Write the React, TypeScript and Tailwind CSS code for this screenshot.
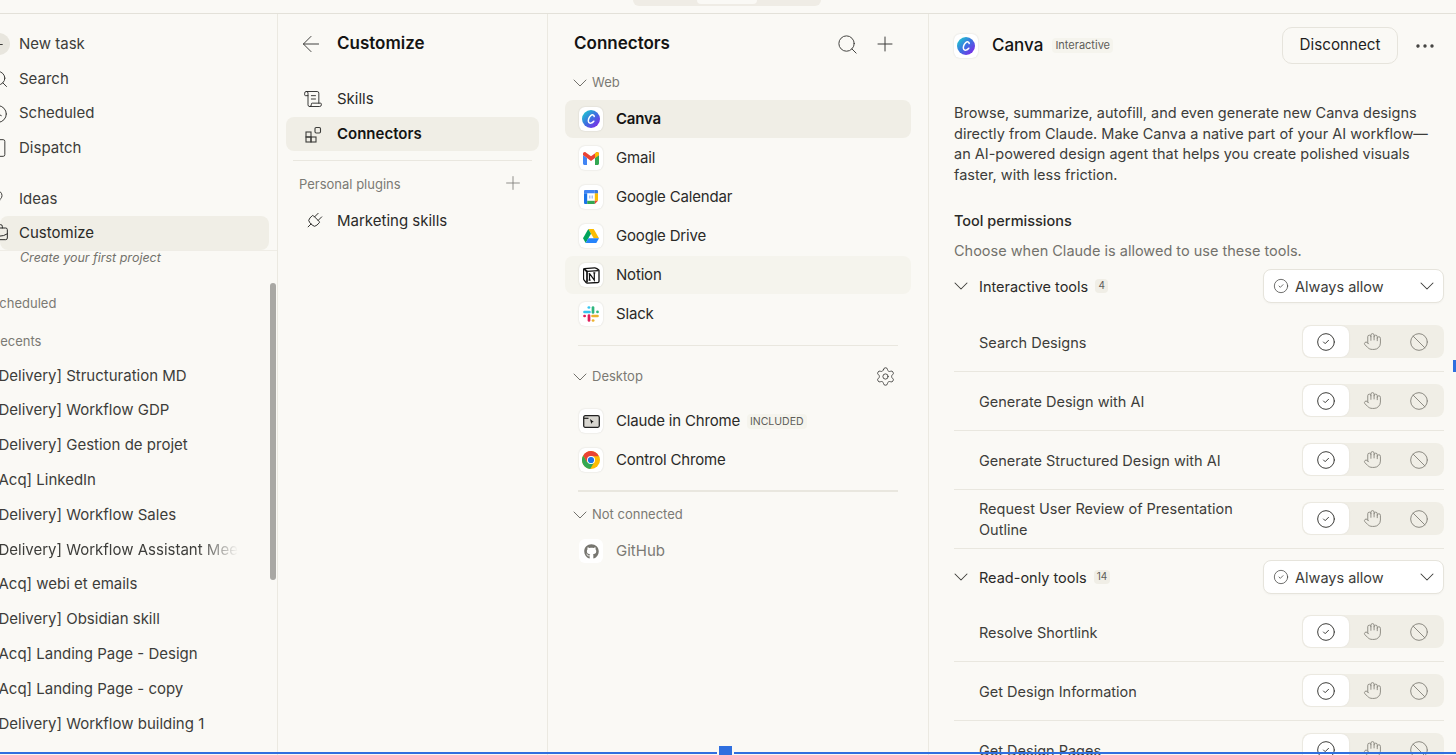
import React from "react";
import { ArrowLeft, Search, Plus, Settings, ChevronDown, Hand, Ban, CircleCheck, Ellipsis, Clock, ScrollText, Plug, Lightbulb, BriefcaseBusiness, Smartphone } from "lucide-react";
import { FaGithub } from "react-icons/fa";

const CanvaLogo = ({ s = 18, id }: { s?: number; id: string }) => (
  <svg width={s} height={s} viewBox="0 0 24 24">
    <defs>
      <linearGradient id={id} x1="0.1" y1="0.1" x2="0.9" y2="0.9">
        <stop offset="0" stopColor="#1fc3d0" />
        <stop offset="0.5" stopColor="#3d6fe0" />
        <stop offset="1" stopColor="#7d2ae8" />
      </linearGradient>
    </defs>
    <circle cx="12" cy="12" r="12" fill={`url(#${id})`} />
    <path d="M16.300 8.800c-.1-2.400-2.600-3-4.600-1.400-2.700 2.200-4.200 6.800-2.700 9.200 1.300 2 4.500 1 6.700-1.700" fill="none" stroke="#fff" strokeWidth="2" strokeLinecap="round" />
  </svg>
);
const GmailLogo = () => (
  <svg width="16" height="13" viewBox="0 0 16 13">
    <path d="M0 3v8.500C0 12.300.7 13 1.500 13H4V6z" fill="#4285f4" />
    <path d="M12 6v7h2.500c.8 0 1.500-.7 1.500-1.500V3z" fill="#34a853" />
    <path d="M0 1.800C0 .3 1.700-.5 2.800.4L8 4.300l5.200-3.900C14.300-.5 16 .3 16 1.800V3l-4 3-4 3-4-3-4-3z" fill="#ea4335" />
    <path d="M12 .9l1.200-.5C14.300-.5 16 .3 16 1.800V3l-4 3z" fill="#fbbc04" />
  </svg>
);
const CalendarLogo = () => (
  <svg width="14" height="14" viewBox="0 0 14 14">
    <rect width="14" height="14" rx="1" fill="#fff" />
    <path d="M0 3.200h3.200V14H1a1 1 0 0 1-1-1z" fill="#1a73e8" />
    <path d="M1 0h9.800v3.200H0V1a1 1 0 0 1 1-1z" fill="#4285f4" />
    <path d="M3.200 10.800h7.600V14H3.200z" fill="#34a853" />
    <path d="M10.800 3.200H14v7.600h-3.200z" fill="#fbbc04" />
    <path d="M10.800 0H13a1 1 0 0 1 1 1v2.200h-3.200z" fill="#3b78d8" />
    <path d="M10.800 10.800H14L10.800 14z" fill="#ea4335" />
    <path d="M5 5.500h1.500v3H5zM7.500 5.500H9v3H7.500z" fill="#a9c4f5" />
  </svg>
);
const DriveLogo = () => (
  <svg width="16" height="14" viewBox="0 0 16 14">
    <path d="M5.300 0h5.400l5.300 9.200h-5.300z" fill="#fbbc04" />
    <path d="M5.300 0L0 9.200 2.700 14l5.300-9.200z" fill="#00a35c" />
    <path d="M2.700 14h10.600L16 9.200H5.300z" fill="#2684fc" />
  </svg>
);
const NotionLogo = () => (
  <svg width="17" height="17" viewBox="0 0 17 17">
    <path d="M1.500 1.600L11.500.8c1-.1 1.400.1 2 .6l2 1.400c.4.3.5.4.5.8v10.700c0 .7-.2 1.100-1.100 1.200l-10.500.6c-.7 0-1-.1-1.300-.5L1 12.800c-.3-.5-.5-.8-.5-1.300V2.600c0-.5.400-1 1-1z" fill="#fff" stroke="#111" strokeWidth="1.300" />
    <path d="M1 1.800l3 2.700v11" fill="none" stroke="#111" strokeWidth="1.700" />
    <path d="M4 4.300l11.500-.7" fill="none" stroke="#111" strokeWidth="1.300" />
    <path d="M6.500 13V6.800l-.8-.2M6.600 6.600l4.700 6.500V5.800m-1 0h2M5.600 13.100h2" fill="none" stroke="#111" strokeWidth="1.200" />
  </svg>
);
const SlackLogo = () => (
  <svg width="16" height="16" viewBox="0 0 16 16" strokeLinecap="round" strokeWidth="2.700" fill="none">
    <path d="M1.500 6h5" stroke="#36c5f0" />
    <path d="M5.800 1.500h.2" stroke="#36c5f0" />
    <path d="M10 1.500v5" stroke="#2eb67d" />
    <path d="M14.500 5.800v.2" stroke="#2eb67d" />
    <path d="M14.500 10h-5" stroke="#ecb22e" />
    <path d="M10 14.500h.2" stroke="#ecb22e" />
    <path d="M6 14.500v-5" stroke="#e01e5a" />
    <path d="M1.500 10h.2" stroke="#e01e5a" />
  </svg>
);
const ClaudeChromeLogo = () => (
  <svg width="17" height="13" viewBox="0 0 17 13">
    <rect x="0.700" y="0.700" width="15.600" height="11.600" rx="1.500" fill="#d8d6d0" stroke="#222" strokeWidth="1.300" />
    <path d="M1 3.300h4.500" stroke="#222" strokeWidth="1.200" />
    <path d="M7 4l3.800 3-1.700.3-.8 1.700z" fill="#111" />
  </svg>
);
const ChromeLogo = () => (
  <svg width="18" height="18" viewBox="0 0 18 18">
    <circle cx="9" cy="9" r="9" fill="#fbbc04" />
    <path d="M9 0A9 9 0 0 0 1.200 4.500L5 11l4-5.800h7.800A9 9 0 0 0 9 0z" fill="#ea4335" />
    <path d="M1.200 4.500A9 9 0 0 0 8.200 18l3.700-6.200L5 11z" fill="#34a853" />
    <circle cx="9" cy="9" r="4" fill="#fff" />
    <circle cx="9" cy="9" r="3.100" fill="#1a73e8" />
  </svg>
);
const ConnectorsIcon = () => (
  <svg width="17" height="17" viewBox="0 0 17 17" fill="none" stroke="#3d3d3a" strokeWidth="1.100">
    <rect x="1" y="6" width="5" height="5" />
    <rect x="1" y="11" width="5" height="5" />
    <rect x="6" y="11" width="5" height="5" />
    <rect x="10" y="1.500" width="5.500" height="5.500" rx="1.200" />
  </svg>
);

const LogoBox = ({ children, dim }: { children: React.ReactNode; dim?: boolean }) => (
  <span className={`flex h-6 w-6 shrink-0 items-center justify-center rounded-md bg-white ${dim ? "" : "shadow-[0_0_2px_rgba(0,0,0,0.14)]"}`}>{children}</span>
);

const SideRow = ({ icon, label, active }: { icon: React.ReactNode; label: string; active?: boolean }) => (
  <div className={`flex h-[34.700px] items-center rounded-lg ${active ? "bg-[#f0eee6] text-[#2a2a28]" : "text-[#3d3d3a]"}`}>
    <span className="flex w-[19px] shrink-0 items-center justify-start overflow-visible">{icon}</span>
    <span>{label}</span>
  </div>
);

const recents = [
  "[Delivery] Structuration MD",
  "[Delivery] Workflow GDP",
  "[Delivery] Gestion de projet",
  "[Acq] LinkedIn",
  "[Delivery] Workflow Sales",
  "[Delivery] Workflow Assistant Meet",
  "[Acq] webi et emails",
  "[Delivery] Obsidian skill",
  "[Acq] Landing Page - Design",
  "[Acq] Landing Page - copy",
  "[Delivery] Workflow building 1",
];

const ConnRow = ({ logo, label, active, hover, bold, extra }: { logo: React.ReactNode; label: string; active?: boolean; hover?: boolean; bold?: boolean; extra?: React.ReactNode }) => (
  <div className={`mb-px flex h-[38px] items-center rounded-lg pl-[14px] tracking-[-0.012em] ${active ? "bg-[#f0eee6]" : hover ? "bg-[#f5f4ed]" : ""}`}>
    <LogoBox>{logo}</LogoBox>
    <span className={`ml-[13px] ${bold ? "font-semibold text-[#141413]" : "text-[#2a2a28]"}`}>{label}</span>
    {extra}
  </div>
);

const SectionHead = ({ label, right }: { label: string; right?: React.ReactNode }) => (
  <div className="flex h-[20px] items-center text-[13px] text-[#7b7a74]">
    <ChevronDown size={24} strokeWidth={1} className="ml-[-6px] text-[#73726c]" />
    <span>{label}</span>
    {right}
  </div>
);

const Toggle = () => (
  <div className="flex h-[33px] w-[142px] shrink-0 items-center rounded-lg bg-[#f0eee6] pl-[1px] text-[#8c8a82]">
    <span className="flex h-[31px] w-[46px] items-center justify-center rounded-lg bg-white text-[#3d3d3a] shadow-[0_0_2px_rgba(0,0,0,0.08)]">
      <CircleCheck size={20} strokeWidth={1.200} />
    </span>
    <span className="flex w-[47px] items-center justify-center"><Hand size={19} strokeWidth={1.200} /></span>
    <span className="flex w-[46px] items-center justify-center"><Ban size={20} strokeWidth={1.200} /></span>
  </div>
);

const ToolRow = ({ label }: { label: React.ReactNode }) => (
  <div className="flex h-[59px] shrink-0 items-center justify-between border-b border-[#e9e7df] pl-[25px] text-[14.500px] leading-[21px] text-[#3d3d3a]">
    <span className="max-w-[300px] pt-[1px]">{label}</span>
    <Toggle />
  </div>
);

const GroupHead = ({ label, count }: { label: string; count: string }) => (
  <div className="flex h-[34px] shrink-0 items-center">
    <ChevronDown size={24} strokeWidth={1.050} className="ml-[-5px] mr-[6px] text-[#3d3d3a]" />
    <span className="pt-[2px] text-[14.500px] text-[#2a2a28]">{label}</span>
    <span className="ml-[7px] flex h-[14px] min-w-[13px] items-center justify-center rounded-sm bg-[#f0eee6] px-[3px] text-[10px] text-[#5e5d59]">{count}</span>
    <div className="ml-auto flex h-[34px] w-[181px] items-center rounded-lg border border-[#e6e4dc] bg-white pl-[9px] pr-[4px] text-[14.500px] text-[#3d3d3a] shadow-[0_1px_2px_rgba(0,0,0,0.03)]">
      <CircleCheck size={16} strokeWidth={1.100} />
      <span className="ml-[6px] pt-[2px]">Always allow</span>
      <ChevronDown size={24} strokeWidth={1.050} className="ml-auto" />
    </div>
  </div>
);

export default function App() {
  return (
    <div className="relative flex h-[755px] w-[1456px] flex-col overflow-hidden bg-[#faf9f5] text-[15px] font-['Inter',sans-serif] text-[#3d3d3a]">
      {/* top strip */}
      <div className="flex h-[14px] shrink-0 justify-center border-b border-[#e3e1d9] bg-[#faf9f5]">
        <div className="ml-[-2px] flex h-[6px] w-[188px] justify-center rounded-b-lg bg-[#efece5]">
          <div className="h-[4px] w-[60px] rounded-b-md bg-[#faf9f5]" />
        </div>
      </div>

      <div className="flex min-h-0 flex-1">
        {/* sidebar */}
        <aside className="relative w-[278px] shrink-0 overflow-hidden border-r border-[#ebe9e1] pt-[13px]">
          <div className="w-[269px]">
            <SideRow label="New task" icon={<span className="ml-[-14px] flex h-[22px] w-[24px] items-center justify-end rounded-full bg-[#e8e6de] pr-[5px]"><Plus size={13} /></span>} />
            <SideRow label="Search" icon={<Search size={20} strokeWidth={1.200} className="ml-[-11px]" />} />
            <SideRow label="Scheduled" icon={<Clock size={20} strokeWidth={1.200} className="ml-[-12px]" />} />
            <SideRow label="Dispatch" icon={<Smartphone size={20} strokeWidth={1.200} className="ml-[-11px]" />} />
            <div className="h-[16px]" />
            <SideRow label="Ideas" icon={<Lightbulb size={20} strokeWidth={1.200} className="ml-[-13px]" />} />
            <div className="flex h-[34px] items-center rounded-lg bg-[#f0eee6] text-[#2a2a28]">
              <span className="flex w-[19px] shrink-0"><BriefcaseBusiness size={20} strokeWidth={1.200} className="ml-[-11px]" /></span>
              <span>Customize</span>
            </div>
          </div>
          <div className="flex h-[15px] items-center border-t border-[#efede6] pl-[20px] text-[12.500px] italic leading-none text-[#73726c]">Create your first project</div>
          <div className="ml-[-9px] mt-[28px] text-[13px] leading-[20px] text-[#7b7a74]">Scheduled</div>
          <div className="ml-[-8px] mt-[18px] text-[13px] leading-[20px] text-[#7b7a74]">Recents</div>
          <div className="mt-[7px] w-[250px]">
            {recents.map((r) => (
              <div key={r} className="ml-[-7px] flex h-[34.800px] items-center whitespace-nowrap">
                <span className={r.endsWith("Meet") ? "block w-[245px] overflow-hidden [mask-image:linear-gradient(to_right,black_84%,transparent_100%)]" : "block"}>{r}</span>
              </div>
            ))}
          </div>
          <div className="absolute left-[270px] top-[269px] h-[297px] w-[6px] rounded-full bg-[#a9a8a4]" />
        </aside>

        {/* customize column */}
        <section className="w-[270px] shrink-0 border-r border-[#ebe9e1] px-[8px] pt-[13px]">
          <div className="flex h-[34px] items-center pl-[12px]">
            <ArrowLeft size={26} strokeWidth={0.900} className="text-[#3d3d3a]" />
            <span className="ml-[13px] text-[17px] font-semibold text-[#141413]">Customize</span>
          </div>
          <div className="mt-[21px] flex h-[34px] items-center pl-[17px] text-[#2a2a28]">
            <ScrollText size={20} strokeWidth={1.100} />
            <span className="ml-[14px]">Skills</span>
          </div>
          <div className="mt-px flex h-[34px] items-center rounded-lg bg-[#f0eee6] pl-[19px] font-semibold text-[#141413]">
            <ConnectorsIcon />
            <span className="ml-[15px]">Connectors</span>
          </div>
          <div className="mx-[7px] mt-[9px] border-t border-[#e9e7df]" />
          <div className="mt-[14px] flex h-[20px] items-center justify-between pl-[13px] pr-[15px] text-[13px] text-[#7b7a74]">
            <span>Personal plugins</span>
            <Plus size={22} strokeWidth={0.900} className="mb-[5px]" />
          </div>
          <div className="mt-[9px] flex h-[34px] items-center pl-[18px] text-[#2a2a28]">
            <Plug size={20} strokeWidth={1.100} className="rotate-45" />
            <span className="ml-[13px]">Marketing skills</span>
          </div>
        </section>

        {/* connectors column */}
        <section className="w-[381px] shrink-0 border-r border-[#ebe9e1] pl-[17px] pr-[17px] pt-[13px]">
          <div className="flex h-[34px] items-center pl-[9px] pr-[14px]">
            <span className="text-[17px] font-semibold text-[#141413]">Connectors</span>
            <Search size={23} strokeWidth={1} className="ml-auto" />
            <Plus size={24} strokeWidth={1} className="ml-[14px]" />
          </div>
          <div className="mt-[12px] pl-[9px]"><SectionHead label="Web" /></div>
          <div className="mt-[7px]">
            <ConnRow active bold label="Canva" logo={<CanvaLogo s={18} id="c1" />} />
            <ConnRow label="Gmail" logo={<GmailLogo />} />
            <ConnRow label="Google Calendar" logo={<CalendarLogo />} />
            <ConnRow label="Google Drive" logo={<DriveLogo />} />
            <ConnRow hover label="Notion" logo={<NotionLogo />} />
            <ConnRow label="Slack" logo={<SlackLogo />} />
          </div>
          <div className="mx-[13px] mt-[12px] border-t border-[#e9e7df]" />
          <div className="mt-[21px] pl-[9px] pr-[15px]">
            <SectionHead label="Desktop" right={<Settings size={21} strokeWidth={1} className="mb-[2px] ml-auto text-[#3d3d3a]" />} />
          </div>
          <div className="mt-[15px]">
            <ConnRow label="Claude in Chrome" logo={<ClaudeChromeLogo />} extra={<span className="ml-[7px] rounded bg-[#f5f4ed] px-[3px] text-[10.500px] leading-[15px] tracking-normal text-[#5e5d59]">INCLUDED</span>} />
            <ConnRow label="Control Chrome" logo={<ChromeLogo />} />
          </div>
          <div className="mx-[13px] mt-[11px] border-t-2 border-[#e9e7df]" />
          <div className="mt-[13px] pl-[9px]"><SectionHead label="Not connected" /></div>
          <div className="mt-[7px] text-[#7b7a74]">
            <div className="flex h-[38px] items-center pl-[14px]">
              <LogoBox dim><FaGithub size={15} className="text-[#777670]" /></LogoBox>
              <span className="ml-[13px] text-[#7b7a74]">GitHub</span>
            </div>
          </div>
        </section>

        {/* detail */}
        <section className="flex min-w-0 flex-1 flex-col overflow-hidden pl-[25px] pr-[12px] pt-[13px]">
          <div className="flex h-[37px] shrink-0 items-center">
            <LogoBox><CanvaLogo s={18} id="c2" /></LogoBox>
            <span className="ml-[14px] text-[17px] font-medium text-[#141413]">Canva</span>
            <span className="ml-[9px] rounded bg-[#f5f4ed] px-[3px] text-[11px] leading-[15px] text-[#5e5d59]">Interactive</span>
            <button className="ml-auto h-[37px] w-[116px] rounded-[10px] border border-[#e6e4dc] text-[15.200px] text-[#1f1f1e]">Disconnect</button>
            <Ellipsis size={24} strokeWidth={1.400} className="ml-[15px] mr-[7px] text-[#3d3d3a]" />
          </div>
          <p className="mt-[39px] w-[485px] shrink-0 text-[14.500px] leading-[20.700px] text-[#3d3d3a]">
            Browse, summarize, autofill, and even generate new Canva designs directly from Claude. Make Canva a native part of your AI workflow—an AI-powered design agent that helps you create polished visuals faster, with less friction.
          </p>
          <div className="mt-[25px] shrink-0 text-[14.500px] font-medium leading-[20px] text-[#2a2a28]">Tool permissions</div>
          <div className="mt-[10px] shrink-0 text-[14.500px] leading-[20px] text-[#73726c]">Choose when Claude is allowed to use these tools.</div>
          <div className="mt-[8px] flex flex-col">
            <GroupHead label="Interactive tools" count="4" />
            <div className="h-[10px] shrink-0" />
            <ToolRow label="Search Designs" />
            <ToolRow label="Generate Design with AI" />
            <ToolRow label="Generate Structured Design with AI" />
            <ToolRow label="Request User Review of Presentation Outline" />
            <div className="h-[11px] shrink-0" />
            <GroupHead label="Read-only tools" count="14" />
            <div className="h-[9px] shrink-0" />
            <ToolRow label="Resolve Shortlink" />
            <ToolRow label="Get Design Information" />
            <ToolRow label="Get Design Pages" />
          </div>
        </section>
      </div>

      {/* selection frame */}
      <div className="absolute bottom-[1px] left-0 right-0 h-[2px] bg-[#2f6fdf]" />
      <div className="absolute bottom-0 left-[717px] h-[9px] w-[17px] border-x-2 border-[#faf9f5] bg-[#2f6fdf]" />
      <div className="absolute left-[1453px] top-[360px] h-[12px] w-[3px] bg-[#2f6fdf]" />
    </div>
  );
}
